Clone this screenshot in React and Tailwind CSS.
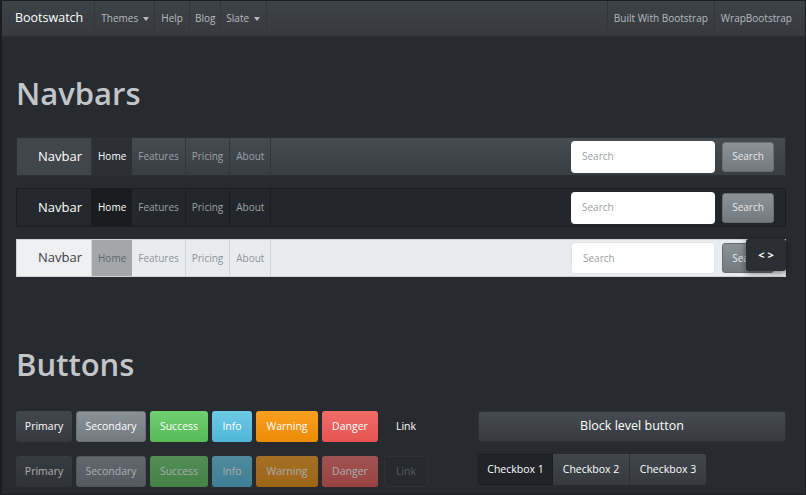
import React from "react";

const font = { fontFamily: '"Open Sans", "Noto Sans", sans-serif' };

function Caret() {
  return <span className="ml-[5px] inline-block w-0 h-0 border-l-[3px] border-r-[3px] border-t-[4px] border-l-transparent border-r-transparent border-t-current align-middle" />;
}

function DemoNavbar({ variant }) {
  const dark = variant === "dark";
  const light = variant === "light";
  const wrap = light
    ? "bg-[#e9ecef] border-[#d0d3d6]"
    : dark
    ? "bg-[#23272b] border-[#1b1e21]"
    : "bg-gradient-to-b from-[#464b51] to-[#393e43] border-[#2c3034]";
  const brand = light
    ? "bg-[#eef0f2] text-[#3a3f44] border-[#d3d6d9]"
    : dark
    ? "bg-[#25292d] text-white border-[#1b1e21]"
    : "bg-[#41464b] text-white border-[#33373b]";
  const active = light
    ? "bg-[#a4a7aa] text-[#5f656b]"
    : dark
    ? "bg-[#1a1d20] text-white"
    : "bg-[#2c3035] text-white";
  const link = light ? "text-[#8d9297]" : "text-[#9ca1a6]";
  const sep = light ? "border-[#d3d6d9]" : dark ? "border-[#1b1e21]" : "border-[#33373b]";
  const h = dark ? "h-[39px]" : light ? "h-[38px]" : "h-[39px]";
  return (
    <div className={`relative flex items-center border ${wrap} ${h}`}>
      <div className={`w-[75px] h-full flex items-center pl-[21px] text-[13px] border-r ${brand}`}>Navbar</div>
      <div className={`h-full flex items-center px-[6px] text-[10px] ${active}`}>Home</div>
      {["Features", "Pricing", "About"].map((t) => (
        <div key={t} className={`h-full flex items-center px-[6px] text-[10px] border-r ${sep} ${link}`}>{t}</div>
      ))}
      <div className="flex-1" />
      <div className={`w-[144px] h-[32px] rounded-[4px] bg-white flex items-center pl-[11px] text-[10px] text-[#9a9fa4] ${light ? "border border-[#e2e5e8]" : ""}`}>Search</div>
      <div className="ml-[7px] mr-[11px] w-[52px] h-[30px] rounded-[3px] bg-gradient-to-b from-[#8b9297] to-[#727a80] border border-[#676e74] flex items-center justify-center text-[10px] text-[#e8e8e8]">Search</div>
    </div>
  );
}

function Btn({ children, cls, disabled }) {
  return (
    <div className={`h-[31px] flex items-center justify-center rounded-[3px] text-[10.5px] ${cls} ${disabled ? "opacity-60" : ""}`}>{children}</div>
  );
}

const btns = [
  ["Primary", "w-[56px] bg-gradient-to-b from-[#42474d] to-[#363a3f] text-white"],
  ["Secondary", "w-[70px] bg-gradient-to-b from-[#8a9196] to-[#737b81] text-white border border-[#6a7177]"],
  ["Success", "w-[58px] bg-gradient-to-b from-[#6fcf6f] to-[#56bb56] text-white"],
  ["Info", "w-[40px] bg-gradient-to-b from-[#6ccbe6] to-[#4fb5d6] text-white"],
  ["Warning", "w-[62px] bg-gradient-to-b from-[#fa9f1e] to-[#ec8c04] text-white"],
  ["Danger", "w-[56px] bg-gradient-to-b from-[#f16c68] to-[#e55450] text-white"],
];

export default function App() {
  return (
    <div style={font} className="relative w-[806px] h-[495px] overflow-hidden bg-[#272b30] border-l-2 border-r border-b border-t border-[#1a1d20]">
      {/* top navbar */}
      <div className="h-[36px] flex items-stretch bg-gradient-to-b from-[#3e4348] to-[#363a3f] border-b border-[#2b2f33] text-[10px]">
        <div className="pl-[13px] pr-[11px] flex items-center text-white text-[12.5px]">Bootswatch</div>
        <div className="flex items-center px-[6px] text-[#b7bbbf] border-l border-r border-[#33373b] w-[61px]">Themes<Caret /></div>
        <div className="flex items-center px-[6px] text-[#b7bbbf] border-r border-[#33373b]">Help</div>
        <div className="flex items-center px-[5px] text-[#b7bbbf] border-r border-[#33373b]">Blog</div>
        <div className="flex items-center px-[5px] text-[#b7bbbf] border-r border-[#33373b] w-[46px]">Slate<Caret /></div>
        <div className="flex-1" />
        <div className="flex items-center px-[6px] text-[#b7bbbf] border-l border-r border-[#33373b]">Built With Bootstrap</div>
        <div className="flex items-center pl-[6px] pr-[13px] text-[#b7bbbf]">WrapBootstrap</div>
      </div>

      <div className="pl-[14px] pr-[19px]">
        <h1 className="mt-[37px] text-[31px] leading-[38px] font-semibold text-[#c3c6c9]">Navbars</h1>
        <div className="mt-[25px] flex flex-col gap-[12px]">
          <DemoNavbar variant="primary" />
          <DemoNavbar variant="dark" />
          <div className="relative">
            <DemoNavbar variant="light" />
            <div className="absolute right-0 top-0 w-[40px] h-[32px] rounded-[3px] bg-[#2b2f34] shadow-[0_2px_6px_rgba(0,0,0,0.5)] flex items-center justify-center text-white text-[11px] font-bold">&lt; &gt;</div>
          </div>
        </div>

        <h1 className="mt-[68px] text-[31px] leading-[38px] font-semibold text-[#c3c6c9]">Buttons</h1>

        <div className="mt-[28px] flex">
          <div className="flex flex-col gap-[14px]">
            <div className="flex gap-[4px] items-center">
              {btns.map(([t, c]) => <Btn key={t} cls={c}>{t}</Btn>)}
              <Btn cls="w-[44px] text-white ml-[2px]">Link</Btn>
            </div>
            <div className="flex gap-[4px] items-center">
              {btns.map(([t, c]) => <Btn key={t} cls={c} disabled>{t}</Btn>)}
              <Btn cls="w-[44px] text-[#555a5f] ml-[2px] bg-[#262a2e] border border-[#2e3237]">Link</Btn>
            </div>
          </div>
          <div className="ml-[50px] flex-1 flex flex-col">
            <div className="h-[31px] rounded-[3px] bg-gradient-to-b from-[#474c52] to-[#363a3f] border border-[#2e3236] flex items-center justify-center text-[12.5px] text-white">Block level button</div>
            <div className="mt-[12px] flex h-[31px] rounded-[3px] overflow-hidden w-[228px]">
              <div className="w-[75px] flex items-center justify-center bg-[#202327] text-white text-[10.5px] border border-[#1b1e21]">Checkbox 1</div>
              <div className="w-[77px] flex items-center justify-center bg-gradient-to-b from-[#41464c] to-[#363a3f] text-white text-[10.5px] border-r border-[#2c3034]">Checkbox 2</div>
              <div className="w-[76px] flex items-center justify-center bg-gradient-to-b from-[#41464c] to-[#363a3f] text-white text-[10.5px]">Checkbox 3</div>
            </div>
          </div>
        </div>
      </div>
    </div>
  );
}
